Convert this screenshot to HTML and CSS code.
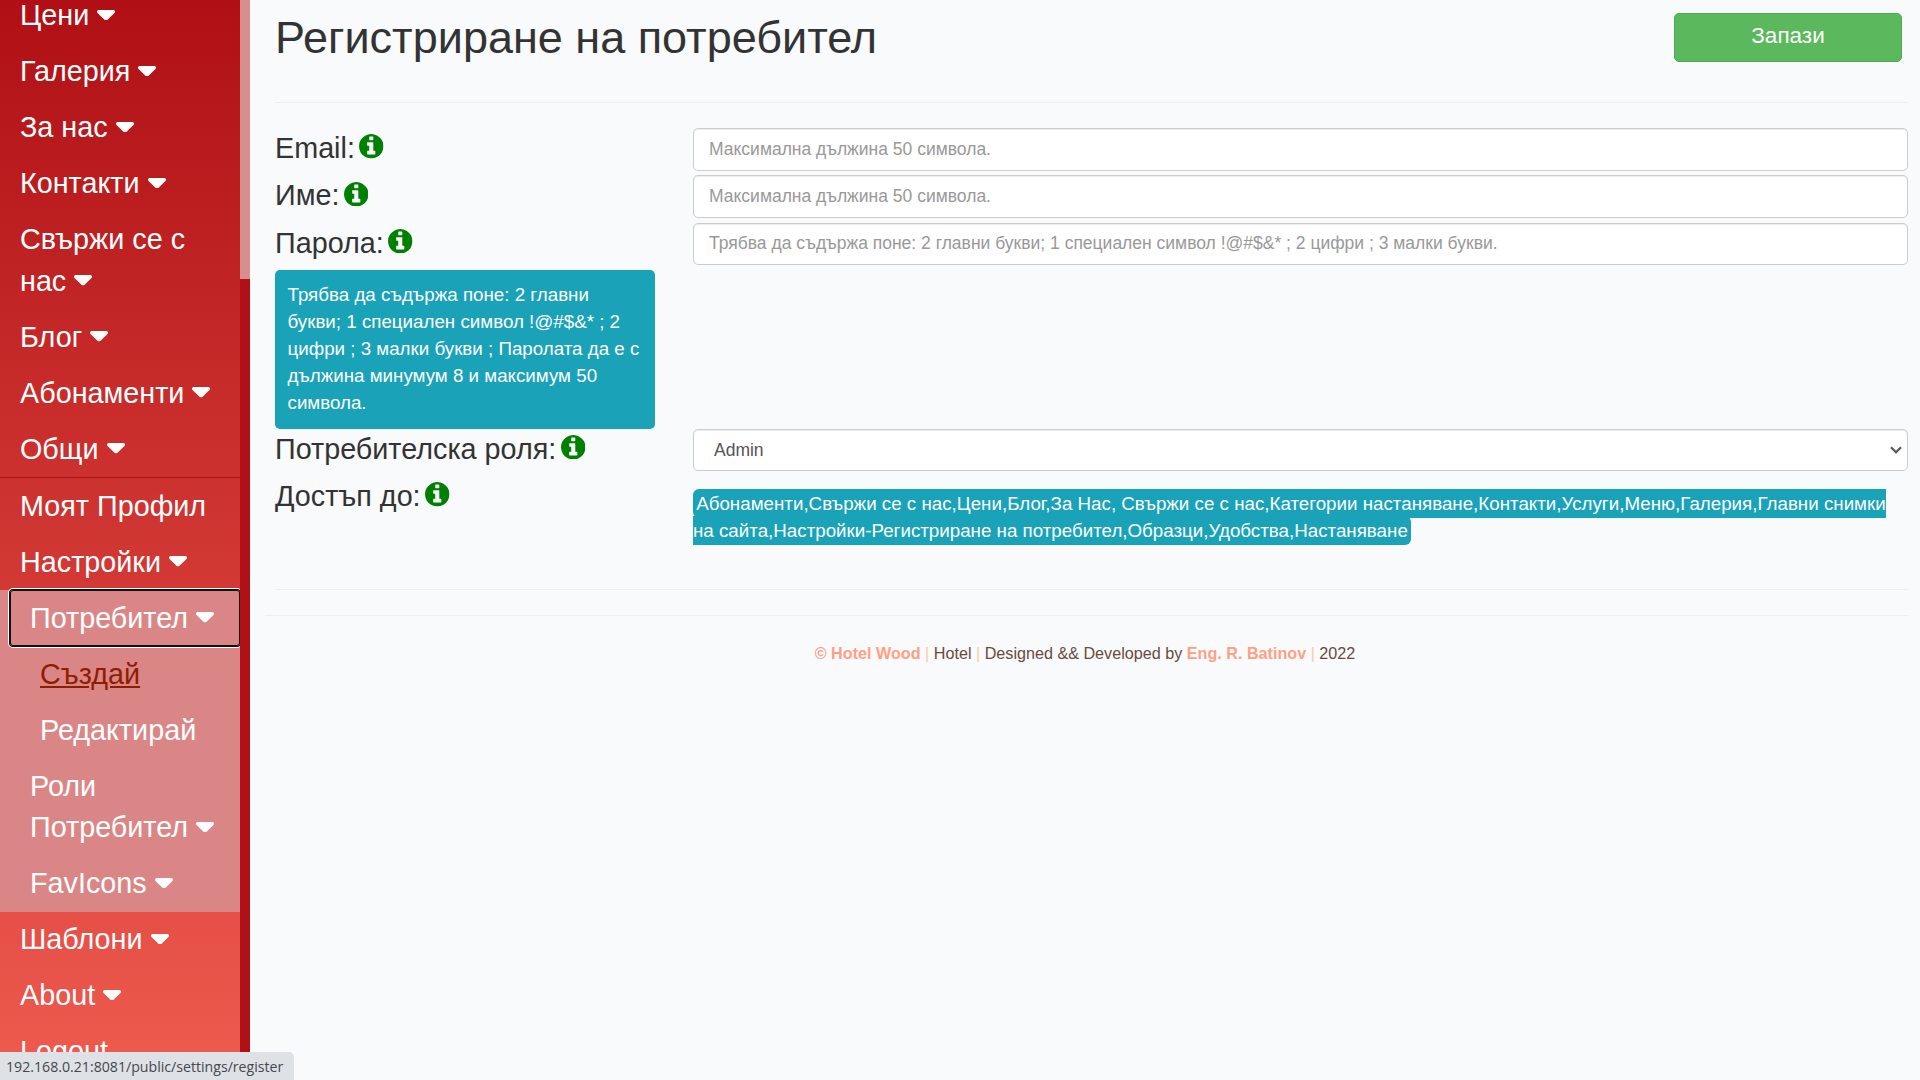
FILE: index.html
```html
<!DOCTYPE html>
<html lang="bg">
<head>
<meta charset="utf-8">
<title>Регистриране на потребител</title>
<link rel="stylesheet" href="styles.css">
</head>
<body>
<svg class="sprite" aria-hidden="true">
  <symbol id="caret" viewBox="0 192 320 192" preserveAspectRatio="none"><path d="M137.4 374.6c12.5 12.5 32.8 12.5 45.3 0l128-128c9.2-9.2 11.9-22.9 6.9-34.9s-16.6-19.8-29.6-19.8L32 192c-12.9 0-24.6 7.8-29.6 19.8s-2.2 25.7 6.9 34.9l128 128z"/></symbol>
  <symbol id="info" viewBox="128 128 1536 1536"><path d="M1152 1376v-160q0-14-9-23t-23-9h-96v-512q0-14-9-23t-23-9h-320q-14 0-23 9t-9 23v160q0 14 9 23t23 9h96v320h-96q-14 0-23 9t-9 23v160q0 14 9 23t23 9h448q14 0 23-9t9-23zm-128-896v-160q0-14-9-23t-23-9h-192q-14 0-23 9t-9 23v160q0 14 9 23t23 9h192q14 0 23-9t9-23zm640 416q0 209-103 385.5t-279.5 279.5-385.5 103-385.5-103-279.5-279.5-103-385.5 103-385.5 279.5-279.5 385.5-103 385.5 103 279.5 279.5 103 385.5z"/></symbol>
</svg>
<div class="layout">
  <aside class="sidebar">
    <nav class="menu">
      <ul class="group">
        <li><a>Цени <svg class="caret"><use href="#caret"/></svg></a></li>
        <li><a>Галерия <svg class="caret"><use href="#caret"/></svg></a></li>
        <li><a>За нас <svg class="caret"><use href="#caret"/></svg></a></li>
        <li><a>Контакти <svg class="caret"><use href="#caret"/></svg></a></li>
        <li><a>Свържи се с нас <svg class="caret"><use href="#caret"/></svg></a></li>
        <li><a>Блог <svg class="caret"><use href="#caret"/></svg></a></li>
        <li><a>Абонаменти <svg class="caret"><use href="#caret"/></svg></a></li>
        <li><a>Общи <svg class="caret"><use href="#caret"/></svg></a></li>
      </ul>
      <ul>
        <li><a>Моят Профил</a></li>
        <li><a>Настройки <svg class="caret"><use href="#caret"/></svg></a>
          <ul class="submenu">
            <li><a class="focused">Потребител <svg class="caret"><use href="#caret"/></svg></a>
              <ul class="nested">
                <li><a class="hovered">Създай</a></li>
                <li><a>Редактирай</a></li>
              </ul>
            </li>
            <li><a>Роли<br>Потребител <svg class="caret"><use href="#caret"/></svg></a></li>
            <li><a>FavIcons <svg class="caret"><use href="#caret"/></svg></a></li>
          </ul>
        </li>
        <li><a>Шаблони <svg class="caret"><use href="#caret"/></svg></a></li>
        <li><a>About <svg class="caret"><use href="#caret"/></svg></a></li>
        <li><a>Logout</a></li>
      </ul>
    </nav>
    <div class="scrollbar"><div class="thumb"></div></div>
  </aside>
  <main class="content">
    <header class="page-head">
      <h1>Регистриране на потребител</h1>
      <button class="save" type="button">Запази</button>
    </header>
    <form class="form">
      <div class="row">
        <label class="label">Email:<svg class="info"><use href="#info"/></svg></label>
        <input class="control" type="text" placeholder="Максимална дължина 50 символа.">
      </div>
      <div class="row">
        <label class="label">Име:<svg class="info"><use href="#info"/></svg></label>
        <input class="control" type="text" placeholder="Максимална дължина 50 символа.">
      </div>
      <div class="row">
        <label class="label">Парола:<svg class="info"><use href="#info"/></svg></label>
        <input class="control" type="text" placeholder="Трябва да съдържа поне: 2 главни букви; 1 специален символ !@#$&amp;* ; 2 цифри ; 3 малки букви.">
      </div>
      <div class="tip">Трябва да съдържа поне: 2 главни букви; 1 специален символ !@#$&amp;* ; 2 цифри ; 3 малки букви ; Паролата да е с дължина минумум 8 и максимум 50 символа.</div>
      <div class="row">
        <label class="label">Потребителска роля:<svg class="info"><use href="#info"/></svg></label>
        <div class="control select">Admin<svg class="chevron" viewBox="0 0 12 8"><path d="M1 1.2l5 5 5-5"/></svg></div>
      </div>
      <div class="row">
        <label class="label">Достъп до:<svg class="info"><use href="#info"/></svg></label>
        <div class="access"><span class="badge">Абонаменти,Свържи се с нас,Цени,Блог,За Нас, Свържи се с нас,Категории настаняване,Контакти,Услуги,Меню,Галерия,Главни снимки на сайта,Настройки-Регистриране на потребител,Образци,Удобства,Настаняване</span></div>
      </div>
    </form>
    <footer class="footer"><b>© Hotel Wood</b> <i>|</i> Hotel <i>|</i> Designed &amp;&amp; Developed by <b>Eng. R. Batinov</b> <i>|</i> 2022</footer>
  </main>
</div>
<div class="status">192.168.0.21:8081/public/settings/register</div>
</body>
</html>
```
FILE: styles.css
```css
* { box-sizing: border-box; }
body {
  margin: 0;
  height: 1080px;
  overflow: hidden;
  background: #f8fafc;
  color: #333;
  font: 17.5px/1.42857 "Liberation Sans", Arial, sans-serif;
}
.sprite { display: none; }
.layout { display: flex; height: 1080px; }

/* Sidebar */
.sidebar {
  display: flex;
  flex: 0 0 250px;
  overflow: hidden;
  background: linear-gradient(#b01015, #ef5b4f);
}
.menu {
  flex: 0 0 240px;
  overflow: hidden;
  font-size: 28.75px;
  line-height: 41.07px;
  color: #fff;
}
.menu ul { margin: 0; padding: 0; list-style: none; }
.menu .group { margin-top: -12.3px; border-bottom: 1px solid #b01116; }
.menu a { display: block; padding: 7.5px 7.5px 7.5px 20px; }
.menu .submenu { background: #db8686; }
.menu .submenu a { margin-left: 10px; }
.menu .nested a { margin-left: 20px; }
.menu .focused {
  border-radius: 3px;
  box-shadow: inset 0 0 0 1px #101010, 0 0 0 1px #101010, 0 0 0 2px #fff;
}
.menu .hovered { color: #8f1e00; text-decoration: underline; }
.caret { width: 18px; height: 10.5px; fill: #fff; vertical-align: 5px; }
.scrollbar { flex: 0 0 10px; background: #b01116; }
.thumb { height: 279px; background: #d78e8f; }

/* Content */
.content { flex: 1; padding: 0 12px 0 15px; }
.page-head {
  display: flex;
  justify-content: space-between;
  align-items: flex-start;
  height: 103px;
  margin-left: 10px;
  padding: 13px 6px 0 0;
  border-bottom: 1px solid #eee;
}
h1 { margin: 0; font-size: 45px; font-weight: 400; line-height: 49.5px; }
.save {
  width: 228px;
  height: 49px;
  padding: 0 0 3px;
  border: 1px solid #4cae4c;
  border-radius: 5px;
  background: #5cb85c;
  color: #fff;
  font: 22.5px "Liberation Sans", Arial, sans-serif;
}
.form {
  height: 487px;
  margin-left: 10px;
  padding-top: 25px;
  border-bottom: 1px solid #eee;
}
.row { display: grid; grid-template-columns: 418px 1fr; height: 47.3px; }
.label { font-size: 28.75px; line-height: 41.07px; white-space: nowrap; }
.info { width: 24.5px; height: 24.5px; margin-left: 4.5px; fill: green; vertical-align: -0.8px; }
.control {
  width: 100%;
  height: 42.5px;
  padding: 0 15px;
  border: 1px solid #ccc;
  border-radius: 5px;
  background: #fff;
  box-shadow: inset 0 1px 1px rgba(0, 0, 0, .075);
  color: #555;
  font: 17.5px "Liberation Sans", Arial, sans-serif;
}
.control::placeholder { color: #999; opacity: 1; }
.select {
  display: flex;
  align-items: center;
  justify-content: space-between;
  padding: 1px 5px 0 20px;
}
.chevron { width: 12px; height: 8px; fill: none; stroke: #555; stroke-width: 2.2; }
.tip {
  width: 380px;
  height: 158.7px;
  padding: 11px 12.5px;
  border-radius: 5px;
  background: #19a2b8;
  color: #fff;
  font-size: 18.75px;
  line-height: 27px;
}
.access { padding-top: 14px; font-size: 18.75px; line-height: 27px; }
.badge {
  padding: 3.75px 3.2px 4.5px;
  border-radius: 6px;
  background: #19a2b8;
  color: #fff;
}
.footer {
  margin-top: 25px;
  padding: 26px 3px 0 0;
  border-top: 1px solid #eee;
  color: #6b4a3c;
  font-size: 16.16px;
  line-height: 23.2px;
  text-align: center;
}
.footer b { color: #ffa085; }
.footer i { color: #f7cf9b; font-style: normal; }

/* Link address bubble of the browser window */
.status {
  position: absolute;
  left: 0;
  bottom: 0;
  width: 294px;
  height: 28px;
  padding-left: 6px;
  border-top-right-radius: 5px;
  background: #dee1e6;
  color: #45484d;
  font: 14.15px/29px "Open Sans", sans-serif;
  white-space: nowrap;
}
```
